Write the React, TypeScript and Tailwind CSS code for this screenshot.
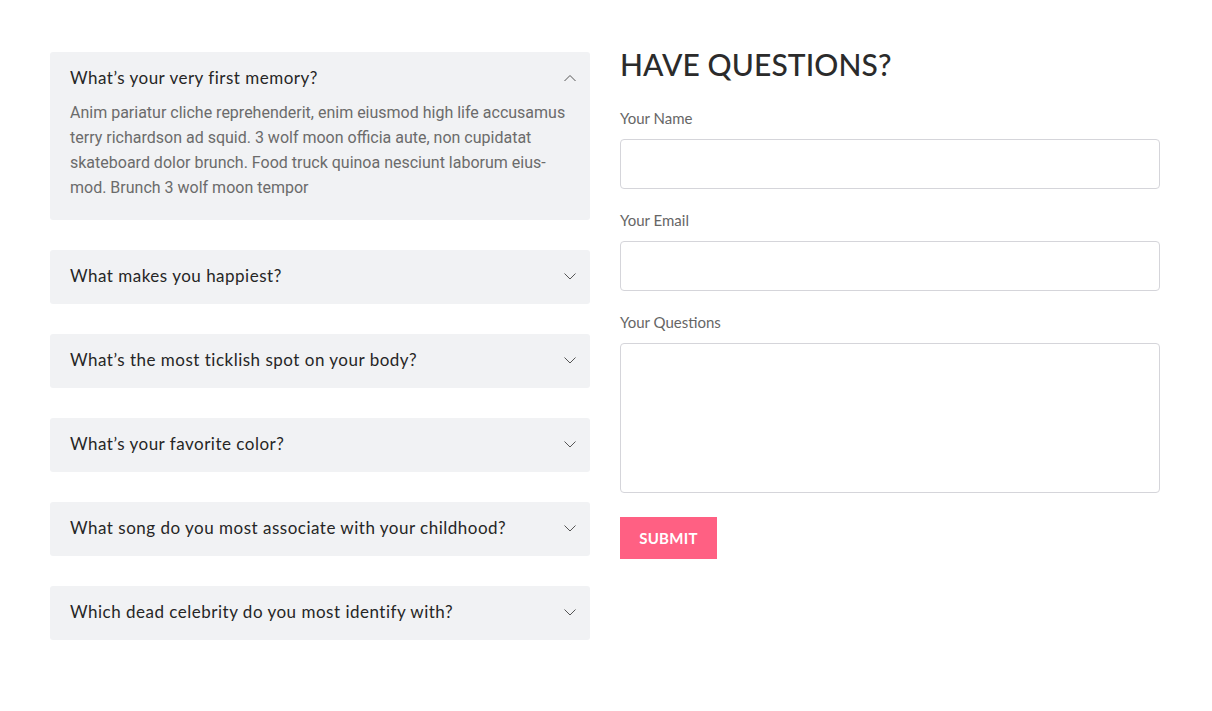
import React, { useState } from "react";

const items = [
  "What’s your very first memory?",
  "What makes you happiest?",
  "What’s the most ticklish spot on your body?",
  "What’s your favorite color?",
  "What song do you most associate with your childhood?",
  "Which dead celebrity do you most identify with?",
];

const body =
  "Anim pariatur cliche reprehenderit, enim eiusmod high life accusamus terry richardson ad squid. 3 wolf moon officia aute, non cupidatat skateboard dolor brunch. Food truck quinoa nesciunt laborum eius- mod. Brunch 3 wolf moon tempor";

function Chevron({ up }: { up: boolean }) {
  return (
    <svg width="14" height="8" viewBox="0 0 14 8" className="shrink-0">
      <polyline
        points={up ? "1.5,7 7,1.5 12.5,7" : "1.5,1.5 7,7 12.5,1.5"}
        fill="none"
        stroke="#555"
        strokeWidth="1"
      />
    </svg>
  );
}

const head = { fontFamily: "Lato, 'Noto Sans', sans-serif" };

export default function App() {
  const [open, setOpen] = useState(0);
  return (
    <div className="min-h-[711px] bg-white pt-[52px] pl-[50px]">
      <div className="flex gap-[30px] w-[1110px]">
        <div className="w-[540px] flex flex-col gap-[30px]">
          {items.map((q, i) => (
            <div key={i} className="bg-[#f1f2f4] rounded-[3px]">
              <button
                onClick={() => setOpen(open === i ? -1 : i)}
                className={`w-full flex items-center justify-between pl-5 pr-[13px] pt-[14px] text-left ${open === i ? "pb-[10px]" : "pb-[16px]"}`}
              >
                <span className="text-[17px] leading-[24px] tracking-[0.5px] text-[#262626]" style={head}>
                  {q}
                </span>
                <Chevron up={open === i} />
              </button>
              {open === i && (
                <p
                  className="px-5 pb-[20px] text-[16px] leading-[25px] text-[#6b6b6b]"
                  style={{ fontFamily: "Roboto, sans-serif" }}
                >
                  {body}
                </p>
              )}
            </div>
          ))}
        </div>
        <div className="w-[540px]" style={head}>
          <h2 className="text-[30px] leading-[26px] font-medium text-[#2b2b2b] tracking-[0.1px] mt-[-1px]">
            HAVE QUESTIONS?
          </h2>
          <form className="mt-[31px]" onSubmit={(e) => e.preventDefault()}>
            <label className="block text-[15px] leading-[20px] text-[#666]">Your Name</label>
            <input className="mt-[11px] block w-full h-[50px] border border-[#d5d5da] rounded-[4px] px-3 outline-none" />
            <label className="block mt-[21px] text-[15px] leading-[20px] text-[#666]">Your Email</label>
            <input className="mt-[11px] block w-full h-[50px] border border-[#d5d5da] rounded-[4px] px-3 outline-none" />
            <label className="block mt-[21px] text-[15px] leading-[20px] text-[#666]">Your Questions</label>
            <textarea className="mt-[11px] block w-full h-[150px] border border-[#d5d5da] rounded-[4px] px-3 py-2 outline-none resize-none" />
            <button className="mt-[24px] w-[97px] h-[42px] bg-[#ff6083] text-white text-[15px] font-bold tracking-[0.3px]">
              SUBMIT
            </button>
          </form>
        </div>
      </div>
    </div>
  );
}
